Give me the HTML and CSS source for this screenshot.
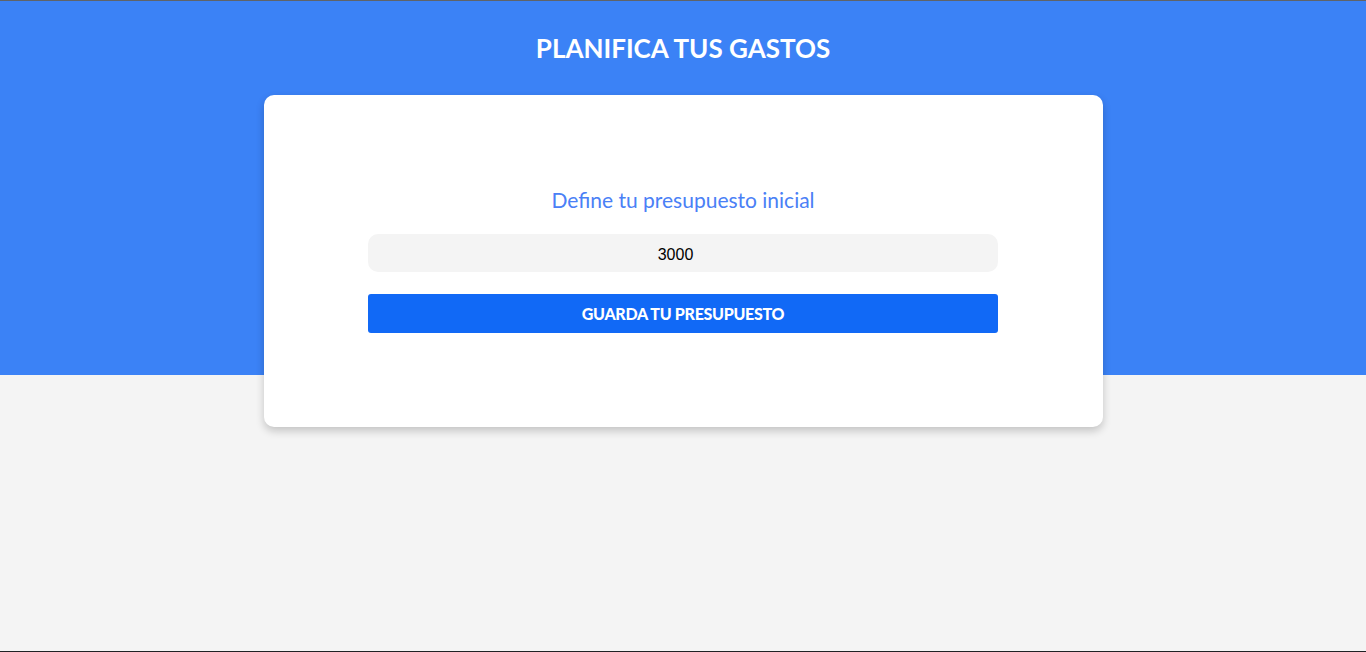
FILE: index.html
```html
<!DOCTYPE html>
<html lang="es">
<head>
<meta charset="utf-8">
<title>Planifica tus gastos</title>
<link rel="stylesheet" href="styles.css">
</head>
<body>
<div class="page">
  <header class="hero">
    <h1 class="hero-title">PLANIFICA TUS GASTOS</h1>
  </header>
  <main class="main">
    <section class="card">
      <form class="budget-form">
        <label class="budget-label" for="budget">Define tu presupuesto inicial</label>
        <input class="budget-input" id="budget" type="number" value="3000">
        <button class="budget-button" type="button">GUARDA TU PRESUPUESTO</button>
      </form>
    </section>
  </main>
</div>
</body>
</html>
```
FILE: styles.css
```css
* { box-sizing: border-box; }
html, body { margin: 0; padding: 0; }
body {
  background: #f4f4f4;
  font-family: Lato, "Liberation Sans", sans-serif;
  border-top: 1px solid #5f6368;
  border-bottom: 1px solid #202124;
  height: 652px;
  overflow: hidden;
}
.page { position: relative; }
.hero {
  background: #3b82f6;
  height: 374px;
  padding-top: 31px;
}
.hero-title {
  margin: 0;
  color: #fff;
  text-align: center;
  font-size: 26px;
  font-weight: 700;
  line-height: 32px;
}
.main {
  display: flex;
  justify-content: center;
  margin-top: -280px;
}
.card {
  width: 839px;
  height: 332px;
  background: #fff;
  border-radius: 10px;
  box-shadow: 0 4px 8px rgba(0,0,0,0.2);
  display: flex;
  justify-content: center;
  padding-top: 89px;
}
.budget-form {
  width: 630px;
  display: flex;
  flex-direction: column;
  align-items: stretch;
}
.budget-label {
  color: #4a80f6;
  text-align: center;
  font-size: 21px;
  line-height: 32px;
  margin-bottom: 18px;
}
.budget-input {
  height: 38px;
  border: none;
  outline: none;
  background: #f4f4f4;
  border-radius: 10px;
  text-align: center;
  font-family: "Liberation Sans", Arial, sans-serif;
  font-size: 16px;
  color: #000;
  padding: 4px 2px 0;
  margin-bottom: 22px;
}
.budget-button {
  height: 39px;
  border: none;
  background: #1169f6;
  color: #fff;
  border-radius: 3px;
  font-family: Lato, "Liberation Sans", sans-serif;
  font-weight: 900;
  font-size: 16px;
  letter-spacing: -0.3px;
  cursor: pointer;
}
```
